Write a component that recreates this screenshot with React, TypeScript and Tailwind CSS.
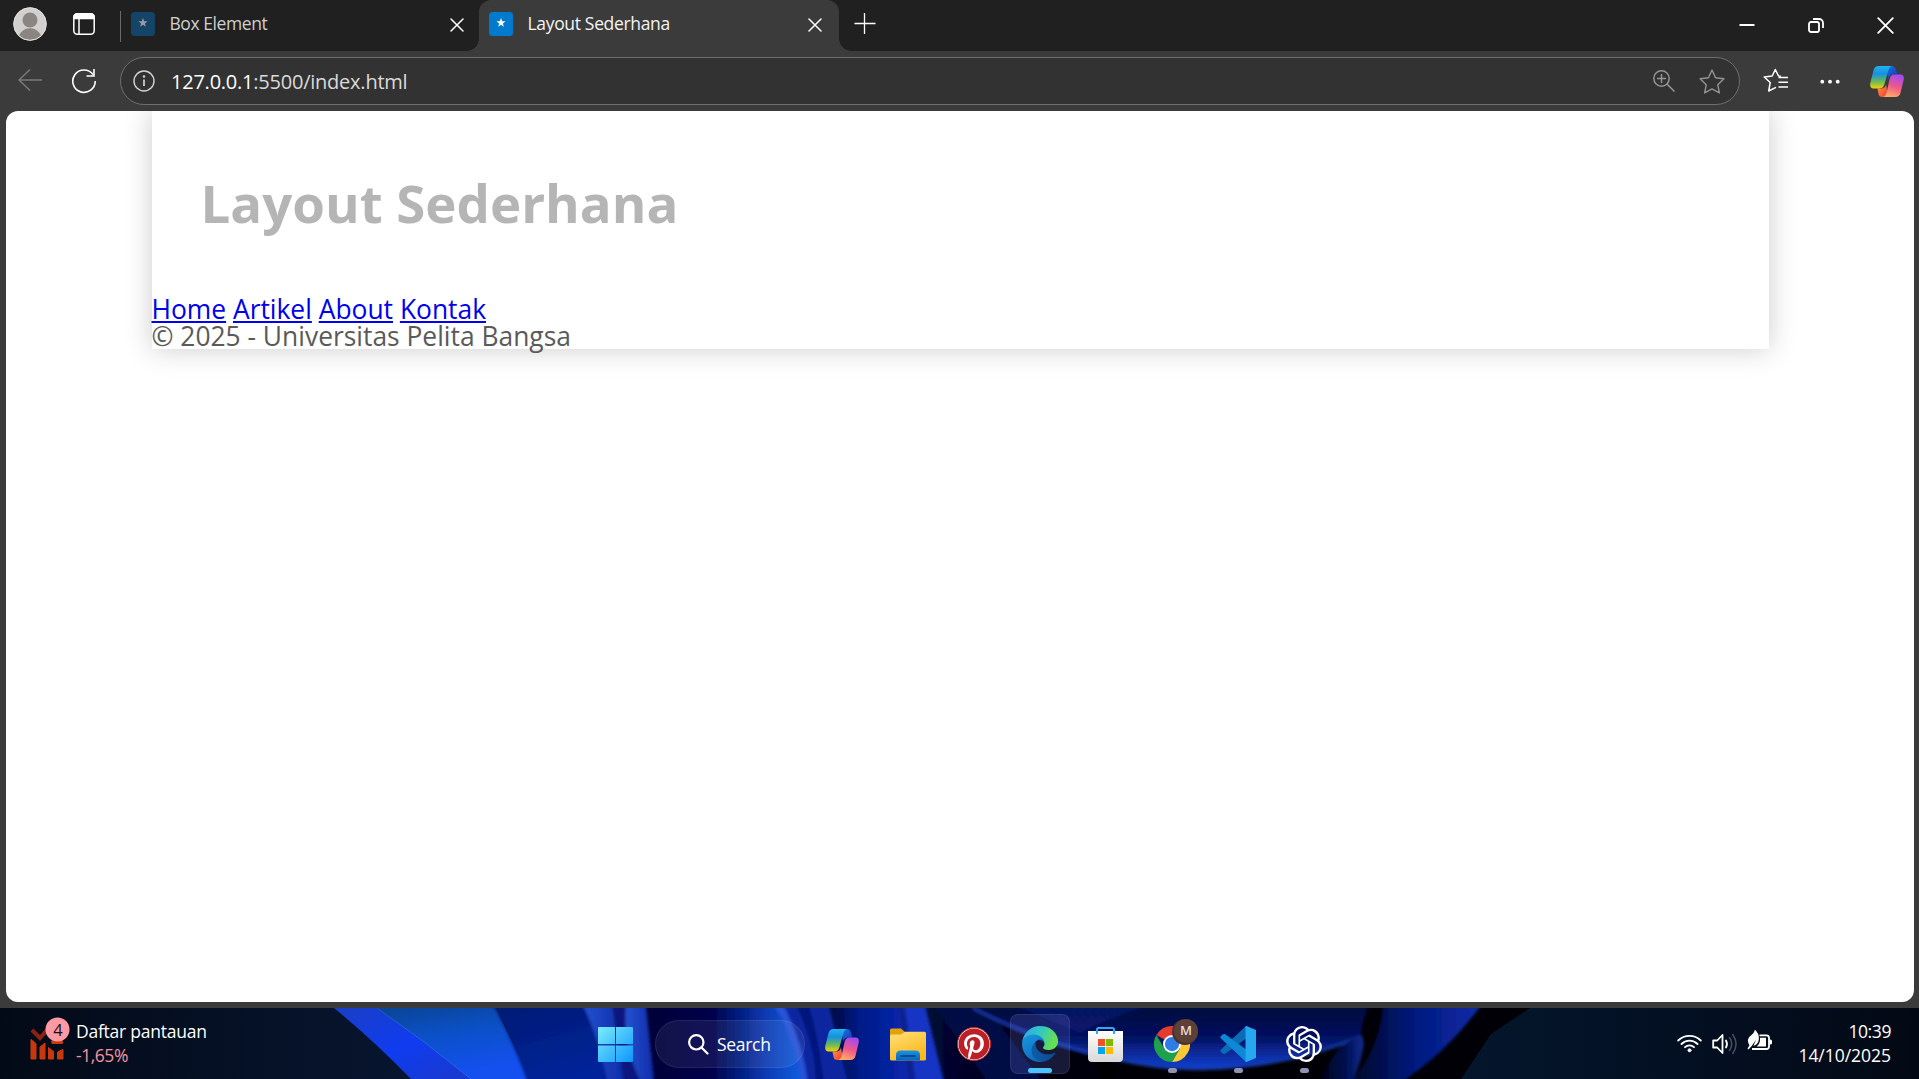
import React from 'react';
import { FaPinterest } from 'react-icons/fa';
import { SiOpenai } from 'react-icons/si';

const UI = "font-['Open_Sans','Noto_Sans',sans-serif]";

function Close({ size, className = '' }: { size: number; className?: string }) {
  return (
    <svg width={size} height={size} viewBox="0 0 14 14" fill="none" stroke="#fff" strokeWidth="1.5" strokeLinecap="round" className={className}>
      <path d="M1 1l12 12M13 1L1 13" />
    </svg>
  );
}

function Favicon({ dim = false }: { dim?: boolean }) {
  return (
    <svg width="24" height="24" viewBox="0 0 24 24" className="shrink-0">
      <rect width="24" height="24" rx="3.5" fill={dim ? '#144568' : '#007acc'} />
      <path d="M12 6l1.2 3.2 3.3.1-2.6 2.1.9 3.3-2.8-1.9-2.8 1.9.9-3.3-2.6-2.1 3.3-.1z" fill={dim ? '#9b9b9b' : '#fff'} />
    </svg>
  );
}

function Copilot({ id }: { id: string }) {
  return (
    <svg width="34" height="31" viewBox="0 0 34 31" className="shrink-0">
      <defs>
        <linearGradient id={id + 'a'} x1="0" y1="0" x2="0" y2="1">
          <stop offset="0" stopColor="#22b4f0" />
          <stop offset=".35" stopColor="#1590e0" />
          <stop offset=".7" stopColor="#6cba58" />
          <stop offset="1" stopColor="#f5d000" />
        </linearGradient>
        <linearGradient id={id + 'b'} x1="0.6" y1="0" x2="0.3" y2="1">
          <stop offset="0" stopColor="#a34af0" />
          <stop offset=".5" stopColor="#f0568c" />
          <stop offset="1" stopColor="#ffb060" />
        </linearGradient>
        <linearGradient id={id + 'c'} x1="0" y1="0" x2="1" y2="1">
          <stop offset="0" stopColor="#1c74e0" />
          <stop offset="1" stopColor="#1238b8" />
        </linearGradient>
        <linearGradient id={id + 'd'} x1="0" y1="0" x2="1" y2="1">
          <stop offset="0" stopColor="#ff9a3c" />
          <stop offset="1" stopColor="#f03838" />
        </linearGradient>
      </defs>
      <path d="M16 0h6q3 0 4 3.500l1.400 5h-4.500q-3.500 0-4.600 4z" fill={`url(#${id}c)`} />
      <path d="M18 31h-6q-3 0-3.500-3l-1-5.500h4q3.500 0 4.500-4z" fill={`url(#${id}d)`} />
      <path d="M8.500 0H22q-2.500.5-3.500 4l-4 14q-1.300 4.500-5 4.500H3.500Q-.6 22.500.3 17L3.600 4Q4.800 0 8.500 0z" fill={`url(#${id}a)`} />
      <path d="M25.500 31H13q2.500-.5 3.500-4l3.200-14.500q1.200-4 4.700-4h6q4.200 0 3.300 5L30.500 27q-1.100 4-5 4z" fill={`url(#${id}b)`} />
    </svg>
  );
}

function TabBar() {
  return (
    <div className="flex h-[51px] bg-[#202020]">
      <div className="flex w-[479px] items-start">
        <svg width="34" height="34" viewBox="0 0 34 34" className="ml-[13px] mt-[7px] shrink-0">
          <defs>
            <clipPath id="avatar"><circle cx="17" cy="17" r="16" /></clipPath>
          </defs>
          <circle cx="17" cy="17" r="16.500" fill="#d2d0ce" />
          <g clipPath="url(#avatar)" fill="#8a8583">
            <circle cx="17" cy="13" r="7.500" />
            <circle cx="17" cy="33" r="11.800" />
          </g>
          <circle cx="17" cy="17" r="16.300" fill="none" stroke="#e4e2e0" strokeWidth="1" />
        </svg>
        <svg width="22" height="22" viewBox="0 0 22 22" className="ml-[26px] mt-[13px] shrink-0" fill="none" stroke="#fff" strokeWidth="1.500">
          <rect x=".8" y=".8" width="20.400" height="20.400" rx="3.500" />
          <path d="M1 5.500V4a3 3 0 0 1 3-3h14a3 3 0 0 1 3 3v1.500z" fill="#fff" />
          <path d="M6 5v16" />
        </svg>
        <div className="ml-[25px] mt-[11px] h-[31px] w-px shrink-0 bg-[#6a6a6a]" />
        <div className="ml-[10px] mt-3 flex"><Favicon dim /></div>
        <span className="ml-[14.500px] mt-2 w-[280px] shrink-0 whitespace-nowrap text-[17.500px] leading-[30px] tracking-[-0.43px] text-[#cfcfcf]">Box Element</span>
        <Close size={14} className="mt-[18px] shrink-0" />
      </div>
      <div className="relative flex w-[360px] items-start rounded-t-xl bg-[#3b3b3b]">
        <div className="absolute -left-3 bottom-0 h-3 w-3 bg-[radial-gradient(circle_at_0_0,#202020_11.500px,#3b3b3b_12px)]" />
        <div className="absolute -right-3 bottom-0 h-3 w-3 bg-[radial-gradient(circle_at_100%_0,#202020_11.500px,#3b3b3b_12px)]" />
        <div className="ml-[10px] mt-3 flex"><Favicon /></div>
        <span className="ml-[14.500px] mt-2 w-[280px] shrink-0 whitespace-nowrap text-[17.500px] leading-[30px] tracking-[-0.33px] text-[#f4f4f4]">Layout Sederhana</span>
        <Close size={14} className="mt-[18px] shrink-0" />
      </div>
      <svg width="22" height="22" viewBox="0 0 22 22" className="ml-[15px] mt-3" stroke="#fff" strokeWidth="1.300">
        <path d="M.5 11.500h21M10.500 1v21" />
      </svg>
      <div className="ml-auto mr-[25px] mt-[17px] flex items-start">
        <svg width="16" height="16" viewBox="0 0 16 16" className="mr-[53px]"><path d="M.5 8h15" stroke="#fff" strokeWidth="2" /></svg>
        <svg width="16" height="16" viewBox="0 0 16 16" className="mr-[53px]" fill="none" stroke="#fff" strokeWidth="1.800">
          <rect x="1" y="5" width="10" height="10" rx="2" />
          <path d="M5 2h6a4 4 0 0 1 4 4v5" />
        </svg>
        <Close size={17} />
      </div>
    </div>
  );
}

const star = 'M12 .9l3.300 7.100 7.700 1-5.700 5.400 1.500 7.700L12 18.400l-6.800 3.700 1.500-7.700L1 9l7.700-1z';

function Toolbar() {
  return (
    <div className="flex h-[60px] items-start bg-[#3b3b3b]">
      <svg width="24" height="22" viewBox="0 0 24 22" className="ml-[18px] mt-[18px]" fill="none" stroke="#7b7b7b" strokeWidth="1.400">
        <path d="M24 11H1M12 .5L1 11l11 10.500" />
      </svg>
      <svg width="26" height="26" viewBox="0 0 26 26" className="ml-[29px] mt-[17px]" fill="none" stroke="#fff" strokeWidth="1.600">
        <path d="M22 6.500A11.200 11.200 0 1 0 24.200 13" />
        <path d="M23 1v7h-7.500" />
      </svg>
      <div className="ml-[23px] mt-[6px] flex h-[48px] w-[1620px] items-center rounded-full border border-[#6e6e6e] bg-[#323232]">
        <svg width="22" height="22" viewBox="0 0 22 22" className="ml-3" fill="none" stroke="#d4d4d4" strokeWidth="1.400">
          <circle cx="11" cy="11" r="10" />
          <path d="M11 9.500V16" strokeWidth="1.700" />
          <circle cx="11" cy="6.500" r=".6" fill="#d4d4d4" />
        </svg>
        <span className="ml-4 mt-px whitespace-nowrap text-[20px] leading-[30px] tracking-[-0.23px] text-[#dadada]"><span className="text-white">127.0.0.1</span>:5500/index.html</span>
        <svg width="22" height="22" viewBox="0 0 22 22" className="ml-auto mr-6" fill="none" stroke="#949494" strokeWidth="1.500">
          <circle cx="8.500" cy="8.500" r="7.700" />
          <path d="M14 14l7.500 7.500M8.500 4v9M4 8.500h9" />
        </svg>
        <svg width="26" height="25" viewBox="0 0 24 23" className="mr-[14px]" fill="none" stroke="#949494" strokeWidth="1.300" strokeLinejoin="round">
          <path d={star} />
        </svg>
      </div>
      <svg width="25" height="25" viewBox="0 0 25 25" className="ml-[23px] mt-[17px]" fill="none" stroke="#fff" strokeWidth="1.500" strokeLinejoin="round">
        <path d="M18 8.300l-2.500-.4L12.300 1.500 9.200 8l-8 1 6 5.500L5.700 23l7.300-3.700M15.500 9.500H25M15.500 14.200H25M15.500 19H25" />
      </svg>
      <svg width="20" height="6" viewBox="0 0 20 6" className="ml-8 mt-[28px]" fill="#fff">
        <circle cx="2.300" cy="2.700" r="1.900" /><circle cx="10" cy="2.700" r="1.900" /><circle cx="17.700" cy="2.700" r="1.900" />
      </svg>
      <div className="ml-[30px] mt-[15px]"><Copilot id="tb" /></div>
    </div>
  );
}

function Page() {
  return (
    <div className="mx-[6px] mr-[5px] h-[891px] overflow-hidden rounded-xl bg-white">
      <main className="ml-[145.500px] h-[238px] w-[1617px] bg-white font-['Open_Sans',sans-serif] text-[26.400px] leading-[26.400px] text-[#5a5a5a] shadow-[0_0_26.400px_#cccccc]">
        <header className="flex h-[185.400px] items-center px-[49px]">
          <h1 className="text-[52.800px] font-bold leading-[52.800px] text-[#b5b5b5]">Layout Sederhana</h1>
        </header>
        <nav className="text-[#0000ee]">
          <a className="underline" href="#home">Home</a> <a className="underline" href="#artikel">Artikel</a>{' '}
          <a className="underline" href="#about">About</a> <a className="underline" href="#kontak">Kontak</a>
        </nav>
        <footer>© 2025 - Universitas Pelita Bangsa</footer>
      </main>
    </div>
  );
}

function Wallpaper() {
  return (
    <svg className="absolute inset-0" width="1919" height="71" viewBox="0 0 1919 71">
      <defs>
        <filter id="soft" x="-5%" y="-20%" width="110%" height="140%"><feGaussianBlur stdDeviation="1.4" /></filter>
        <linearGradient id="w0"><stop offset="0" stopColor="#030a17" /><stop offset=".6" stopColor="#051126" /><stop offset="1" stopColor="#07152f" /></linearGradient>
        <linearGradient id="w1" x1="0" y1="0" x2="1" y2="1"><stop offset="0" stopColor="#1a3fc4" /><stop offset=".5" stopColor="#0f3cf0" /><stop offset="1" stopColor="#1c38c8" /></linearGradient>
        <linearGradient id="w2" x1="0" y1="0" x2="0.300" y2="1"><stop offset="0" stopColor="#0a4494" /><stop offset=".45" stopColor="#0b50c8" /><stop offset="1" stopColor="#1450f0" /></linearGradient>
        <linearGradient id="w3" x1="0" y1="0" x2="0.400" y2="1"><stop offset="0" stopColor="#061a72" /><stop offset="1" stopColor="#06249a" /></linearGradient>
        <linearGradient id="w4" x1="0" y1="0" x2="1" y2="0"><stop offset="0" stopColor="#2452d0" /><stop offset="1" stopColor="#0e2ca8" /></linearGradient>
        <linearGradient id="w5"><stop offset="0" stopColor="#020238" /><stop offset=".4" stopColor="#02024c" /><stop offset=".7" stopColor="#0838b0" /><stop offset="1" stopColor="#126cf0" /></linearGradient>
        <linearGradient id="w6"><stop offset="0" stopColor="#01032a" /><stop offset=".4" stopColor="#031a84" /><stop offset="1" stopColor="#0828b4" /></linearGradient>
        <linearGradient id="w7" gradientUnits="userSpaceOnUse" x1="1180" y1="0" x2="1180" y2="60"><stop offset="0" stopColor="#02063c" /><stop offset=".5" stopColor="#031262" /><stop offset="1" stopColor="#1240d0" /></linearGradient>
        <linearGradient id="w8" x1="0" y1="0" x2="1" y2="0"><stop offset="0" stopColor="#010624" /><stop offset=".5" stopColor="#041a80" /><stop offset="1" stopColor="#0a2ca8" /></linearGradient>
        <linearGradient id="w9" x1="0" y1="0" x2="1" y2="0"><stop offset="0" stopColor="#010116" /><stop offset=".6" stopColor="#031052" /><stop offset="1" stopColor="#0b2b90" /></linearGradient>
        <linearGradient id="w10"><stop offset="0" stopColor="#04162c" /><stop offset=".5" stopColor="#030f22" /><stop offset="1" stopColor="#030914" /></linearGradient>
        <linearGradient id="w11" gradientUnits="userSpaceOnUse" x1="922" y1="0" x2="1110" y2="0"><stop offset="0" stopColor="#020838" /><stop offset=".4" stopColor="#01021c" /><stop offset="1" stopColor="#000004" /></linearGradient>
      </defs>
      <rect width="1919" height="71" fill="#000006" />
      <path d="M0 0h340l80 71H0z" fill="url(#w0)" />
      <path d="M334 0h60l90 71h-73Q372 31 334 0z" fill="url(#w1)" />
      <path d="M376 0h120l34 71h-60Q424 33 376 0z" fill="url(#w2)" />
      <path d="M377 0Q425 33 471 71" stroke="#3c76e8" strokeOpacity=".5" fill="none" />
      <g filter="url(#soft)">
        <path d="M492-5h95l24 81h-83Q512 30 492-5z" fill="url(#w3)" />
        <path d="M600-5h50l6 81h-50z" fill="#08177e" />
        <path d="M582-5h30q6 45 12 81h-16Q599 30 582-5z" fill="url(#w4)" />
        <path d="M626-5h19l9 81h-12Q622 38 626-5z" fill="url(#w4)" />
        <path d="M645-5h135l35 81H654z" fill="url(#w5)" />
        <path d="M822-5h80l10 81h-70z" fill="url(#w6)" />
        <path d="M772-5h56l20 81h-46Q793 24 772-5z" fill="#0a25a0" />
        <path d="M772-5h10q20 36 26 81h-6Q793 24 772-5z" fill="#2552d8" />
        <path d="M795-5q20 40 21 81h8Q818 24 808-5z" fill="#06157c" />
        <path d="M922-5h190v81H942z" fill="url(#w11)" />
        <path d="M932-5h52l60 81h-55Q959 32 932-5z" fill="#020a44" />
        <path d="M898-5h26l20 81h-35z" fill="#1236c4" />
        <path d="M898-5h6l12 81h-7z" fill="#07208e" />
        <path d="M966-5q37 23 67 34 45 16 77 20 50 12 92 11 90-2 159-33 1-19 11-32z" fill="url(#w7)" />
        <path d="M1010-5h145q-45 15-75 30-35-14-70-30z" fill="#0a2078" opacity=".6" />
        <path d="M973 0q60 32 137 50 50 12 92 11 90-2 159-33" stroke="#1d48cc" strokeWidth="3" strokeOpacity=".7" fill="none" />
        <path d="M1361 27q8 6-9 49h-32q12-39 41-49z" fill="url(#w9)" />
        <path d="M1383-5h100q-38 52-85 81h-48q32-40 33-81z" fill="url(#w8)" />
      </g>
      <path d="M1530 0h389v71h-458l30-45z" fill="url(#w10)" />
    </svg>
  );
}

function Cell({ children, dot = false, active = false }: { children: React.ReactNode; dot?: boolean; active?: boolean }) {
  return (
    <div className="flex w-[66px] justify-center">
      <div className={active ? 'relative flex h-[60px] w-[60px] items-center justify-center rounded-lg border border-white/8 bg-[#787cdc]/20' : 'relative flex h-[60px] w-[60px] items-center justify-center'}>
        {children}
        {dot && <div className="absolute bottom-[1px] left-[26px] h-[5px] w-[9px] rounded-full bg-[#9293b4]" />}
        {active && <div className="absolute bottom-0 left-[17px] h-[5px] w-6 rounded-full bg-[#4cc2ff]" />}
      </div>
    </div>
  );
}

function Explorer() {
  return (
    <svg width="36" height="33" viewBox="0 0 36 33">
      <defs>
        <linearGradient id="ex" x1="0" y1="0" x2=".5" y2="1"><stop offset="0" stopColor="#ffe07a" /><stop offset="1" stopColor="#fcb91c" /></linearGradient>
        <linearGradient id="ey" x1="0" y1="0" x2="0" y2="1"><stop offset="0" stopColor="#1a94e4" /><stop offset="1" stopColor="#0a64b4" /></linearGradient>
      </defs>
      <path d="M0 2Q0 .5 1.500.5H11l4 3.500v6H0z" fill="#e2a00c" />
      <path d="M0 8q0-1.500 1.500-1.500H11L15 3.800h19.500Q36 3.800 36 5.300V31q0 1.500-1.500 1.500h-33Q0 32.500 0 31z" fill="url(#ex)" />
      <path d="M6 32.500V27q0-4.500 4.500-4.500h15Q30 22.500 30 27v5.500z" fill="url(#ey)" />
      <path d="M11 28h14" stroke="#0a4c94" strokeWidth="1.800" strokeLinecap="round" />
    </svg>
  );
}

function Edge() {
  return (
    <svg width="36" height="36" viewBox="0 0 256 256">
      <defs>
        <linearGradient id="eg1" x1="0" y1="0" x2="1" y2="0.300"><stop offset="0" stopColor="#2aa8e0" /><stop offset=".5" stopColor="#30c6c8" /><stop offset="1" stopColor="#66e050" /></linearGradient>
        <linearGradient id="eg2" x1="0" y1="0" x2=".5" y2="1"><stop offset="0" stopColor="#1b9ae0" /><stop offset="1" stopColor="#0c6cc0" /></linearGradient>
        <linearGradient id="eg3" x1="0" y1="0" x2="1" y2="0"><stop offset="0" stopColor="#0f5ea8" /><stop offset="1" stopColor="#0c4894" /></linearGradient>
      </defs>
      <path d="M231 190.500c-3.400 1.800-6.900 3.400-10.500 4.700a102 102 0 0 1-35.900 6.500c-47.300 0-88.500-32.500-88.500-74.300 0-11.400 6.500-21.900 16.500-27.300-42.800 1.800-53.800 46.400-53.800 72.500 0 74 68.100 81.400 82.800 81.400 7.900 0 19.800-2.300 27-4.600l1.300-.4a128 128 0 0 0 66.600-52.800c2.300-3.500-1.700-7.600-5.500-5.700z" fill="url(#eg3)" />
      <path d="M105.700 241.400a79 79 0 0 1-22.700-21.300 81 81 0 0 1 29.500-120c3.100-1.500 8.500-4.100 15.600-4a32 32 0 0 1 25.700 13 32 32 0 0 1 6.300 18.700c0-.2 24.500-79.600-80-79.600C36.300 48.200.1 89.900.1 126.600a131 131 0 0 0 12.200 56 128 128 0 0 0 156.400 67 76 76 0 0 1-62.900-8.100z" fill="url(#eg2)" />
      <path d="M152.300 148.900c-.9 1-3.400 2.500-3.400 5.600 0 2.600 1.700 5.200 4.800 7.300 14.400 10.100 41.700 8.700 41.800 8.700 10.700 0 21.200-2.900 30.500-8.300A61.800 61.800 0 0 0 256.500 108.800c.3-22.400-8-37.300-11.300-43.900C223.900 23.300 178 .1 128 .1A128 128 0 0 0 .1 126.200c.5-36.500 36.800-66 80-66 3.500 0 23.500.3 42 10 16.300 8.600 24.900 18.900 30.800 29.200 6.200 10.700 7.300 24.100 7.300 29.500 0 5.300-2.700 13.300-7.800 19.900z" fill="url(#eg1)" />
    </svg>
  );
}

function Store() {
  return (
    <svg width="35" height="36" viewBox="0 0 35 36" className="mr-px">
      <defs><linearGradient id="st" x1="0" y1="0" x2="0" y2="1"><stop offset="0" stopColor="#fff" /><stop offset="1" stopColor="#d8d8d8" /></linearGradient></defs>
      <path d="M0 5h35v27q0 4-4 4H4q-4 0-4-4z" fill="url(#st)" />
      <path d="M9 8V3.500Q9 2 10.500 2h14Q26 2 26 3.500V8" fill="none" stroke="#2aa8f0" strokeWidth="2" />
      <path d="M10 13h7v7h-7z" fill="#f25022" /><path d="M18 13h7v7h-7z" fill="#7fba00" />
      <path d="M10 21h7v7h-7z" fill="#00a4ef" /><path d="M18 21h7v7h-7z" fill="#ffb900" />
    </svg>
  );
}

function Chrome() {
  return (
    <svg width="36" height="36" viewBox="0 0 48 48">
      <path d="M24 24L3.200 12A24 24 0 0 1 44.800 12z" fill="#e33b2e" />
      <path d="M24 12h20.800A24 24 0 0 1 24 48l10.400-18z" fill="#fcc934" />
      <path d="M13.600 30L3.200 12A24 24 0 0 0 24 48l10.400-18z" fill="#1ea04c" />
      <circle cx="24" cy="24" r="12" fill="#fff" />
      <circle cx="24" cy="24" r="9.500" fill="#2f7be8" />
    </svg>
  );
}

function Code() {
  return (
    <svg width="36" height="36" viewBox="0 0 36 36">
      <path d="M26 0L1 23.500q-1.200 1.200 0 2.400l2 1.800q1 .8 2.200 0L28 11z" fill="#0a6cb4" />
      <path d="M26 36L1 12.500q-1.200-1.200 0-2.400l2-1.800q1-.8 2.200 0L28 25z" fill="#0d88d4" />
      <path d="M26.500 0L36 4v28l-9.500 4q-1.500.2-1-2V2q-.5-2.200 1-2z" fill="#25a8f0" />
    </svg>
  );
}

function Taskbar() {
  return (
    <div className="relative h-[71px] overflow-hidden">
      <Wallpaper />
      <div className="relative flex h-full items-start">
        <svg width="40" height="46" viewBox="0 0 40 46" className="ml-[30px] mt-[8px] shrink-0">
          <path d="M2 14l8 8 8-9" fill="none" stroke="#8e2212" strokeWidth="4" />
          <g fill="#c8380c" stroke="#c8380c" strokeWidth="1" strokeLinejoin="round">
            <path d="M1 23.500l5 4V43H1z" /><path d="M10 31l5-4v16h-5z" /><path d="M18.500 31.500l5 4V43h-5z" /><path d="M27.500 36l5.500-2.500V43h-5.500zM21.500 25h11v2.500H22z" />
          </g>
          <circle cx="27.500" cy="13.500" r="12" fill="#ff99a4" />
          <text x="28" y="19.500" textAnchor="middle" fontSize="16.500" fill="#1a1012" fontFamily="Open Sans, sans-serif">4</text>
        </svg>
        <div className="ml-[6px] mt-[11px] w-[522px] shrink-0 whitespace-nowrap text-[17.500px] leading-6">
          <div className="tracking-[-0.24px] text-white">Daftar pantauan</div>
          <div className="tracking-[-0.45px] text-[#f594a0]">-1,65%</div>
        </div>
        <svg width="35" height="35" viewBox="0 0 35 35" className="mt-[19px] shrink-0">
          <defs><linearGradient id="win" gradientUnits="userSpaceOnUse" x1="0" y1="0" x2="35" y2="35"><stop offset="0" stopColor="#7cecff" /><stop offset="1" stopColor="#0c96fa" /></linearGradient></defs>
          <path d="M1 0h16v17H0V1q0-1 1-1zM18 0h16q1 0 1 1v16H18zM0 18.500h17V35H1q-1 0-1-1zM18 18.500h17V34q0 1-1 1H18z" fill="url(#win)" />
        </svg>
        <div className="ml-[22px] mt-3 flex h-12 w-[150px] shrink-0 items-center rounded-full border border-white/8 bg-white/7 pl-[32px]">
          <svg width="21" height="21" viewBox="0 0 21 21" fill="none" stroke="#fff" strokeWidth="2.200" strokeLinecap="round"><circle cx="8.300" cy="8.300" r="7.200" /><path d="M13.500 13.500l6 6" /></svg>
          <span className="ml-2 text-[17.500px] tracking-[-0.3px] text-white">Search</span>
        </div>
        <div className="ml-1 mt-[6px] flex shrink-0">
          <Cell><Copilot id="tk" /></Cell>
          <Cell><Explorer /></Cell>
          <Cell><div className="rounded-full border border-[#bd2126] bg-white"><FaPinterest size={32} color="#bd1f27" /></div></Cell>
          <Cell active><Edge /></Cell>
          <Cell><Store /></Cell>
          <Cell dot>
            <Chrome />
            <div className="absolute left-[32px] top-[5px] flex h-6 w-6 items-center justify-center rounded-full bg-[#5d4037] text-[13px] font-semibold text-[#e8dcd8] shadow-[-1px_1px_0_1px_#4a332c]">M</div>
          </Cell>
          <Cell dot><Code /></Cell>
          <Cell dot><SiOpenai size={36} color="#fff" /></Cell>
        </div>
        <svg width="25" height="20" viewBox="0 0 25 20" className="ml-auto mt-[25px]" fill="none" stroke="#fff" strokeWidth="1.800" strokeLinecap="round">
          <path d="M1.200 7.500a16 16 0 0 1 22.600 0M4.500 11a11.300 11.300 0 0 1 16 0M8 14.200a6.500 6.500 0 0 1 9 0" /><circle cx="12.500" cy="17.300" r="1.500" fill="#fff" strokeWidth="1" />
        </svg>
        <svg width="25" height="24" viewBox="0 0 25 24" className="ml-[10px] mt-[24px]" fill="none" stroke="#fff" strokeWidth="1.800" strokeLinecap="round" strokeLinejoin="round">
          <path d="M1.200 8.500h4l5.300-5.500v18l-5.300-5.500h-4z" /><path d="M14 8.500q2 3.500 0 7" /><path d="M17.500 5.500q4.500 6.500 0 13M20.800 2.500q6.500 9.500 0 19" stroke="#46505e" strokeWidth="1.500" />
        </svg>
        <svg width="26" height="25" viewBox="0 0 26 25" className="ml-[10px] mt-[21px]">
          <path d="M12.500 6.300h7a2.500 2.500 0 0 1 2.500 2.500v8.700a2.500 2.500 0 0 1-2.500 2.500H5" fill="none" stroke="#fff" strokeWidth="1.800" />
          <path d="M22.500 10.500h.8q1.700 0 1.700 1.500v2q0 1.500-1.700 1.500h-.8z" fill="#fff" />
          <path d="M13 8.700h6v8.700H9.500q4-2.700 3.500-8.700z" fill="#fff" />
          <path d="M8 .8q4.500 4.200 3.800 9.700-.6 5-5.300 6.300l2.500-6-4.300 6.200-3.200 3.500-1-1 2-3.200Q-1.500 10.300 4.500 6 7 4.200 8 .8z" fill="#fff" />
        </svg>
        <div className="ml-[18px] mr-7 mt-[11px] w-[100px] shrink-0 text-right text-[17.500px] leading-6 text-white">
          <div className="tracking-[-0.4px]">10:39</div>
          <div className="tracking-[-0.03px]">14/10/2025</div>
        </div>
      </div>
    </div>
  );
}

export default function App() {
  return (
    <div className={`h-[1079px] w-[1919px] overflow-hidden bg-[#3b3b3b] ${UI}`}>
      <TabBar />
      <Toolbar />
      <Page />
      <div className="h-[6px]" />
      <Taskbar />
    </div>
  );
}
